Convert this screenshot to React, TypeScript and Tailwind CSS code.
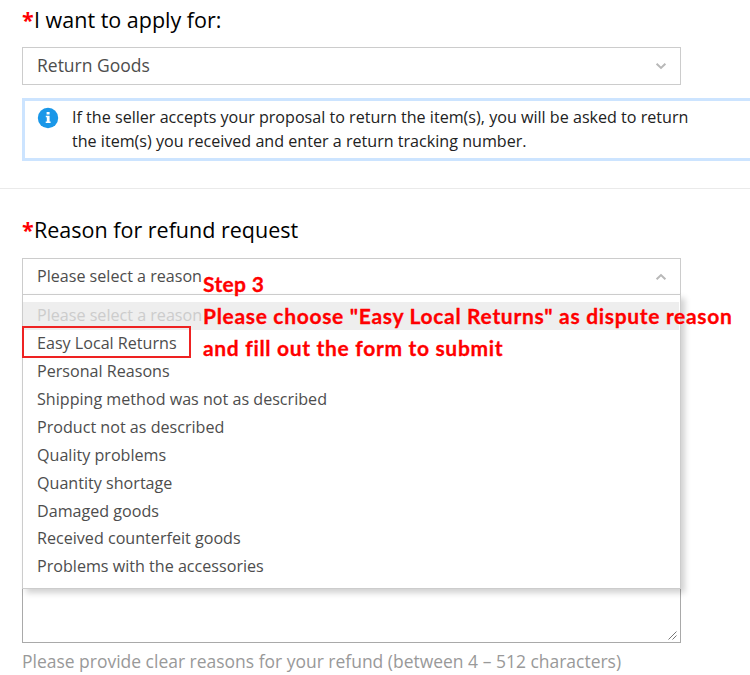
import React from "react";

const reasons = [
  "Easy Local Returns",
  "Personal Reasons",
  "Shipping method was not as described",
  "Product not as described",
  "Quality problems",
  "Quantity shortage",
  "Damaged goods",
  "Received counterfeit goods",
  "Problems with the accessories",
];

function Chevron({ up = false }: { up?: boolean }) {
  return (
    <svg width="12" height="8" viewBox="0 0 12 8" fill="none" stroke="#b8b8b8" strokeWidth="2">
      <path d={up ? "M1.6 6.3 6 2.1l4.4 4.2" : "M1.6 1.7 6 5.9l4.4-4.2"} />
    </svg>
  );
}

function Heading({ children }: { children: React.ReactNode }) {
  return (
    <h2 className="flex h-8 items-center whitespace-nowrap text-[21.5px] leading-8 text-black">
      <span className="w-3 font-bold text-[#ff0000]">*</span>
      <span>{children}</span>
    </h2>
  );
}

export default function App() {
  return (
    <div className="h-[675px] w-[750px] overflow-hidden bg-white pl-[22px] pt-1 font-['Open_Sans',sans-serif] text-[#4d4d4d]">
      <Heading>I want to apply for:</Heading>
      <div className="mt-[11px] flex h-[38px] w-[659px] items-center justify-between border border-[#cccccc] pl-3.5 pr-[13px] text-[17.5px]">
        <span className="-mt-0.5">Return Goods</span>
        <Chevron />
      </div>

      <div className="mt-[13px] flex h-[63px] gap-[13px] border-[3px] border-r-0 border-[#cce4ff] pl-3 pt-1 text-[16.12px] leading-6 text-[#222222]">
        <svg className="mt-0.5 shrink-0" width="22" height="22" viewBox="0 0 22 22">
          <circle cx="11" cy="11" r="10.2" fill="#1a97e8" />
          <path d="M9.6 5h3v2.4h-3zM8.8 8.8h3.8v5.8h1V16H8.7v-1.4h1.1v-4.4h-1z" fill="#fff" />
        </svg>
        <p className="whitespace-nowrap">
          If the seller accepts your proposal to return the item(s), you will be asked to return
          <br />
          the item(s) you received and enter a return tracking number.
        </p>
      </div>

      <hr className="-ml-[22px] mt-[27px] border-t border-[#eaeaea]" />

      <div className="mt-[25px]">
        <Heading>Reason for refund request</Heading>
      </div>

      <div className="relative mt-3 w-[659px]">
        <div className="flex h-9 items-center justify-between border border-b-0 border-[#cccccc] pl-3.5 pr-[13px] text-[16.1px]">
          <span className="-mt-px">Please select a reason</span>
          <Chevron up />
        </div>
        <ul className="relative z-10 h-[295px] border border-[#cccccc] bg-white pt-[7.2px] text-[16.12px] leading-[27.9px] shadow-[4px_4px_6px_rgba(0,0,0,0.18)]">
          <li className="mr-px bg-[#eeeeee] pl-3.5 text-[#cccccc]">Please select a reason</li>
          {reasons.map((reason) => (
            <li key={reason} className="whitespace-nowrap pl-3.5">
              {reason}
            </li>
          ))}
        </ul>
        <div className="absolute left-0 top-[68px] z-20 h-[32px] w-[169px] border-2 border-[#ee2222]" />
        <div className="absolute left-[181px] top-[10px] z-20 whitespace-nowrap font-['Lato',sans-serif] text-[21px] font-bold leading-8 tracking-[0.68px] text-[#ff0000] [-webkit-text-stroke:0.3px_#ff0000]">
          <p className="tracking-[0.35px]">Step 3</p>
          <p>Please choose "Easy Local Returns" as dispute reason</p>
          <p>and fill out the form to submit</p>
        </div>
      </div>

      <div className="flex h-[54px] w-[659px] items-end justify-end border border-t-0 border-[#a9a9a9] pb-0.5 pr-[3px]">
        <svg width="9" height="9" viewBox="0 0 9 9" stroke="#777" strokeWidth="1">
          <path d="M.5 8.5l8-8M4.5 8.5l4-4" />
        </svg>
      </div>
      <p className="mt-1.5 whitespace-nowrap text-[17.48px] leading-6 text-[#999999]">
        Please provide clear reasons for your refund (between 4 – 512 characters)
      </p>
    </div>
  );
}
